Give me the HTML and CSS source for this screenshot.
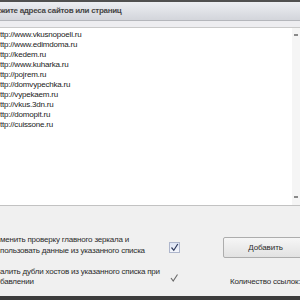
FILE: index.html
```html
<!DOCTYPE html>
<html lang="ru">
  <head>
    <meta charset="UTF-8" />
    <title>Добавление сайтов</title>
    <link rel="stylesheet" href="styles.css">
  </head>
  <body>
    <div class="window">
      <div class="topEdge"></div>
      <!-- заголовок -->
      <div class="titleBar">жите адреса сайтов или страниц</div>
      <div class="band"></div>
      <!-- список адресов -->
      <div class="listBox">
        <div class="urls">
          <div>ttp://www.vkusnopoeli.ru</div>
          <div>ttp://www.edimdoma.ru</div>
          <div>ttp://kedem.ru</div>
          <div>ttp://www.kuharka.ru</div>
          <div>ttp://pojrem.ru</div>
          <div>ttp://domvypechka.ru</div>
          <div>ttp://vypekaem.ru</div>
          <div>ttp://vkus.3dn.ru</div>
          <div>ttp://domopit.ru</div>
          <div>ttp://cuissone.ru</div>
        </div>
        <div class="scroll">
          <span class="arrow"></span>
          <span class="arrow"></span>
        </div>
      </div>
      <!-- настройки -->
      <div class="options">
        <div class="optText">менить проверку главного зеркала и<br>пользовать данные из указанного списка</div>
        <div class="check boxed">
          <svg width="9" height="9" viewBox="0 0 9 9"><path d="M1.5 4.5 L3.8 7.3 L7.8 1" fill="none" stroke="#2e3a5c" stroke-width="1.2"/></svg>
        </div>
        <div class="right"><button class="button">Добавить</button></div>
        <div class="optText second">алить дубли хостов из указанного списка при<br>бавлении</div>
        <div class="check plain">
          <svg width="10" height="10" viewBox="0 0 10 10"><path d="M2 5 L4.2 8 L8.5 1.5" fill="none" stroke="#6a6a6a" stroke-width="1.1"/></svg>
        </div>
        <div class="right second"><span class="count">Количество ссылок:</span></div>
      </div>
      <div class="bottomEdge"></div>
    </div>
  </body>
</html>
```

FILE: styles.css
```css
body {
  margin: 0;
  font-family: "Liberation Sans", Arial, sans-serif;
  font-size: 8px;
  letter-spacing: -0.2px;
  color: #2b2b2b;
}
.window {
  width: 300px;
  height: 300px;
  background: #f0f0f0;
  display: flex;
  flex-direction: column;
  overflow: hidden;
}
.topEdge {
  height: 2px;
  flex: none;
  background: #505050;
}
.titleBar {
  height: 18px;
  flex: none;
  line-height: 18px;
  background: linear-gradient(#eceef2, #d3d5db);
  border-bottom: 1px solid #b4b6bb;
  font-weight: bold;
  letter-spacing: -0.3px;
  color: #454545;
  white-space: nowrap;
}
.band {
  height: 6px;
  flex: none;
  background: #ededf0;
  border-bottom: 1px solid #c9c9c9;
}
.listBox {
  height: 177px;
  flex: none;
  display: flex;
  background: #fff;
  border-bottom: 1px solid #c2c2c2;
}
.urls {
  flex: 1;
  padding-top: 2px;
  line-height: 10px;
  white-space: nowrap;
  color: #222;
}
.scroll {
  width: 8px;
  background: #f5f5f5;
  display: flex;
  flex-direction: column;
  justify-content: space-between;
  align-items: center;
  padding: 6px 0 7px;
}
.arrow {
  width: 4px;
  height: 2px;
  background: #8a8a8a;
}
.options {
  flex: 1;
  display: grid;
  grid-template-columns: 169px 54px 1fr;
  grid-template-rows: 32px 1fr;
  padding-top: 28px;
}
.optText {
  line-height: 11px;
  white-space: nowrap;
}
.optText.second {
  padding-top: 1px;
  line-height: 10px;
}
.check svg {
  display: block;
}
.check.boxed {
  border: 1px solid #aeb6cc;
  background: linear-gradient(#dde4f4, #f4f6fb);
  width: 9px;
  height: 9px;
  margin-top: 8px;
}
.check.plain {
  width: 10px;
  height: 10px;
  margin-top: 7px;
}
.right {
  padding-top: 3px;
}
.button {
  width: 85px;
  height: 21px;
  font-family: inherit;
  font-size: 8px;
  letter-spacing: -0.1px;
  color: #2b2b2b;
  border: 1px solid #adadad;
  background: linear-gradient(#f6f6f6, #e2e2e2);
  border-radius: 2px;
  padding: 0;
}
.right.second {
  padding: 11px 0 0 7px;
  white-space: nowrap;
}
.bottomEdge {
  height: 4px;
  flex: none;
  background: #3c3c3c;
}
```
